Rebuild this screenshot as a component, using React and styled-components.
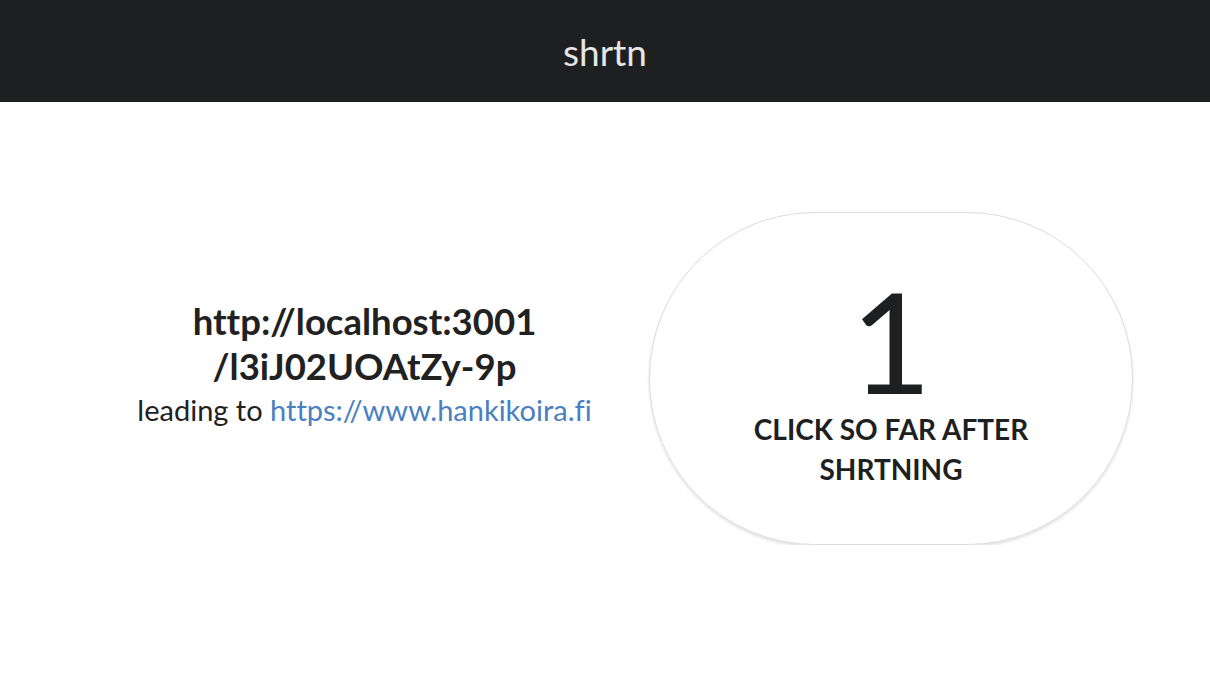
import React from "react";
import styled, { createGlobalStyle } from "styled-components";

const Global = createGlobalStyle`
  html, body { margin: 0; padding: 0; background: #fff; }
  body {
    font-family: Lato, "Noto Sans", sans-serif;
    color: #212121;
    font-variant-ligatures: none;
  }
`;

const Header = styled.header`
  height: 102px;
  background: #1e1f21;
  display: flex;
  align-items: center;
  justify-content: center;
`;

const Title = styled.h1`
  margin: 0;
  font-size: 37px;
  font-weight: 400;
  color: #e6e6e6;
  line-height: 1;
`;

const Main = styled.main`
  display: flex;
  align-items: center;
  padding: 110px 77px 0 80px;
`;

const Info = styled.div`
  flex: 1;
  text-align: center;
  margin-bottom: 29px;
`;

const ShortUrl = styled.div`
  font-size: 36.5px;
  font-weight: 700;
  line-height: 45px;
  color: #212121;
`;

const Leading = styled.div`
  font-size: 29px;
  line-height: 40px;
  color: #212121;
  margin-top: 1px;
`;

const Link = styled.a`
  color: #4a7fc1;
  text-decoration: none;
`;

const Bubble = styled.div`
  width: 482px;
  height: 331px;
  border: 1px solid #dcdcdc;
  border-radius: 166px;
  box-shadow: 0 2px 3px rgba(0, 0, 0, 0.12);
  display: flex;
  flex-direction: column;
  align-items: center;
  justify-content: center;
  box-sizing: content-box;
`;

const Count = styled.div`
  font-size: 140px;
  font-weight: 400;
  line-height: 120px;
  color: #1e1f21;
  margin-top: 12px;
`;

const Caption = styled.div`
  font-size: 28px;
  font-weight: 700;
  line-height: 40px;
  text-transform: uppercase;
  text-align: center;
  color: #1e1f21;
  max-width: 300px;
  margin-top: 9px;
`;

export default function App() {
  return (
    <>
      <Global />
      <Header>
        <Title>shrtn</Title>
      </Header>
      <Main>
        <Info>
          <ShortUrl>http://localhost:3001</ShortUrl>
          <ShortUrl>/l3iJ02UOAtZy-9p</ShortUrl>
          <Leading>
            leading to <Link href="#">https://www.hankikoira.fi</Link>
          </Leading>
        </Info>
        <Bubble>
          <Count>1</Count>
          <Caption>Click so far after shrtning</Caption>
        </Bubble>
      </Main>
    </>
  );
}
